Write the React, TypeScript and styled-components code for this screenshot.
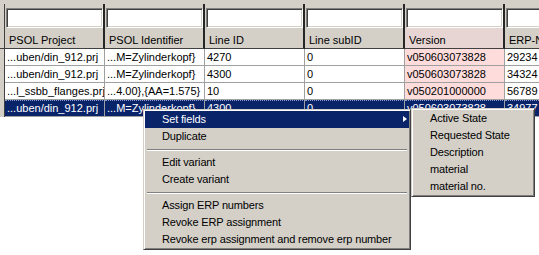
import React from "react";
import styled, { createGlobalStyle } from "styled-components";

const GlobalStyle = createGlobalStyle`
  html, body { margin: 0; padding: 0; background: #ffffff; }
  body {
    font-family: "Liberation Sans", Arial, sans-serif;
    font-size: 11px;
    color: #000000;
  }
`;

const Page = styled.div`
  position: relative;
  width: 539px;
  height: 255px;
  overflow: hidden;
  background: #ffffff;
`;

const TopStrip = styled.div`
  height: 4px;
  background: #d4d0c8;
`;

const Row = styled.div`
  display: flex;
  width: max-content;
`;

const Corner = styled.div`
  flex: none;
  width: 5px;
  height: 45px;
  box-sizing: border-box;
  background: #d4d0c8;
  border-right: 1px solid #404040;
  border-bottom: 1px solid #404040;
`;

const RowHead = styled.div`
  flex: none;
  width: 5px;
  height: 17px;
  box-sizing: border-box;
  background: #d4d0c8;
  border-right: 1px solid #404040;
`;

const HeaderCell = styled.div`
  flex: none;
  width: 100px;
  height: 45px;
  box-sizing: border-box;
  display: flex;
  flex-direction: column;
  background: #d4d0c8;
  border-right: 2px solid #262626;
  border-bottom: 1px solid #404040;
`;

const FilterBox = styled.div`
  height: 24px;
  box-sizing: border-box;
  padding: 4px 0 0 1px;
`;

const FilterInput = styled.input`
  display: block;
  width: 100%;
  height: 20px;
  box-sizing: border-box;
  margin: 0;
  padding: 0 3px;
  background: #ffffff;
  border: 1px solid;
  border-color: #808080 #ffffff #ffffff #808080;
  box-shadow: inset 1px 1px 0 #404040, inset -1px -1px 0 #d4d0c8;
  outline: none;
  font: inherit;
`;

const HeaderLabel = styled.div<{ $tint?: boolean }>`
  flex: 1;
  box-sizing: border-box;
  padding: 5px 0 0 4px;
  line-height: 15px;
  white-space: nowrap;
  overflow: hidden;
  background: ${(p) => (p.$tint ? "#e6d5d3" : "#d4d0c8")};
`;

const Cell = styled.div<{ $tint?: boolean; $selected?: boolean }>`
  flex: none;
  width: 100px;
  height: 17px;
  box-sizing: border-box;
  padding: 1px 0 0 2px;
  line-height: 15px;
  white-space: nowrap;
  overflow: hidden;
  border-right: 1px solid #a0a0a0;
  border-bottom: 1px solid #a0a0a0;
  background: ${(p) =>
    p.$selected ? "#0a246a" : p.$tint ? "#ffdcdc" : "#ffffff"};
  color: ${(p) => (p.$selected ? "#ffffff" : "#000000")};
  border-top: ${(p) => (p.$selected ? "1px dotted #8a9cc8" : "none")};
  padding-top: ${(p) => (p.$selected ? "0" : "1px")};
`;

const Menu = styled.div<{ $left: number; $top: number; $width: number }>`
  position: absolute;
  left: ${(p) => p.$left}px;
  top: ${(p) => p.$top}px;
  width: ${(p) => p.$width}px;
  box-sizing: border-box;
  padding: 1px;
  background: #d4d0c8;
  border: 1px solid;
  border-color: #d4d0c8 #404040 #404040 #d4d0c8;
  box-shadow: inset 1px 1px 0 #ffffff, inset -1px -1px 0 #808080;
  display: flex;
  flex-direction: column;
  letter-spacing: -0.15px;
`;

const MenuItem = styled.div<{ $active?: boolean }>`
  position: relative;
  height: 17px;
  line-height: 17px;
  padding-left: 17px;
  white-space: nowrap;
  background: ${(p) => (p.$active ? "#0a246a" : "transparent")};
  color: ${(p) => (p.$active ? "#ffffff" : "#000000")};
`;

const Arrow = styled.span`
  position: absolute;
  right: 2px;
  top: 5px;
  width: 0;
  height: 0;
  border-left: 4px solid currentColor;
  border-top: 3.5px solid transparent;
  border-bottom: 3.5px solid transparent;
`;

const Separator = styled.div`
  height: 9px;
  box-sizing: border-box;
  padding: 4px 2px 0;
  &::after {
    content: "";
    display: block;
    border-top: 1px solid #808080;
    border-bottom: 1px solid #ffffff;
  }
`;

const columns = [
  { title: "PSOL Project" },
  { title: "PSOL Identifier" },
  { title: "Line ID" },
  { title: "Line subID" },
  { title: "Version", tint: true },
  { title: "ERP-Nummer" },
];

const rows = [
  ["...uben/din_912.prj", "...M=Zylinderkopf}", "4270", "0", "v050603073828", "29234"],
  ["...uben/din_912.prj", "...M=Zylinderkopf}", "4300", "0", "v050603073828", "34324"],
  ["...l_ssbb_flanges.prj", "...4.00},{AA=1.575}", "10", "0", "v050201000000", "56789"],
  ["...uben/din_912.prj", "...M=Zylinderkopf}", "4300", "0", "v050603073828", "34977"],
];

type Entry = { label: string; active?: boolean; sub?: boolean } | "sep";

const mainMenu: Entry[] = [
  { label: "Set fields", active: true, sub: true },
  { label: "Duplicate" },
  "sep",
  { label: "Edit variant" },
  { label: "Create variant" },
  "sep",
  { label: "Assign ERP numbers" },
  { label: "Revoke ERP assignment" },
  { label: "Revoke erp assignment and remove erp number" },
];

const subMenu: Entry[] = [
  { label: "Active State" },
  { label: "Requested State" },
  { label: "Description" },
  { label: "material" },
  { label: "material no." },
];

function MenuEntries({ items }: { items: Entry[] }) {
  return (
    <>
      {items.map((it, i) =>
        it === "sep" ? (
          <Separator key={i} />
        ) : (
          <MenuItem key={i} $active={it.active}>
            {it.label}
            {it.sub && <Arrow />}
          </MenuItem>
        )
      )}
    </>
  );
}

export default function App() {
  return (
    <>
      <GlobalStyle />
      <Page>
        <TopStrip />
        <Row>
          <Corner />
          {columns.map((c) => (
            <HeaderCell key={c.title}>
              <FilterBox>
                <FilterInput readOnly value="" />
              </FilterBox>
              <HeaderLabel $tint={c.tint}>{c.title}</HeaderLabel>
            </HeaderCell>
          ))}
        </Row>
        {rows.map((r, ri) => {
          const selected = ri === 3;
          return (
            <Row key={ri}>
              <RowHead />
              {r.map((v, ci) => (
                <Cell
                  key={ci}
                  $tint={columns[ci].tint}
                  $selected={selected}
                >
                  {v}
                </Cell>
              ))}
            </Row>
          );
        })}
        <Menu $left={143} $top={109} $width={268}>
          <MenuEntries items={mainMenu} />
        </Menu>
        <Menu $left={411} $top={108} $width={124}>
          <MenuEntries items={subMenu} />
        </Menu>
      </Page>
    </>
  );
}
